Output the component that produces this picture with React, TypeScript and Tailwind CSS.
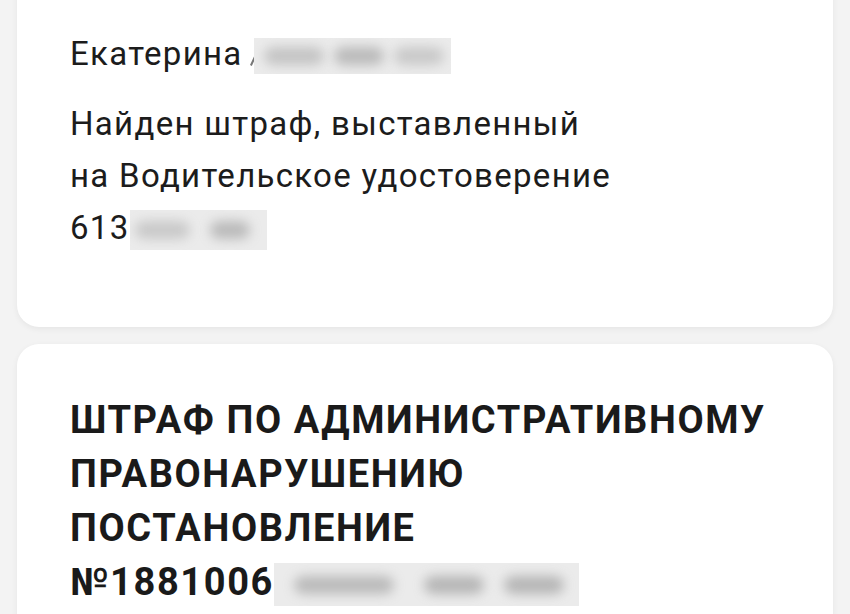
import React from 'react';

const Blur = ({ w, h, blobs }: { w: number; h: number; blobs: number[][] }) => (
  <span
    className="relative inline-block overflow-hidden bg-[#ebebeb] align-middle"
    style={{ width: w, height: h }}
  >
    {blobs.map(([l, bw, o], i) => (
      <span
        key={i}
        className="absolute top-1/2 -translate-y-1/2 h-[18px] rounded-full bg-[#8a8a8a] blur-[6px]"
        style={{ left: l, width: bw, opacity: o }}
      />
    ))}
  </span>
);

const App = () => {
  return (
    <div className="w-[850px] h-[614px] overflow-hidden bg-[#f3f3f3] px-[17px] font-['Roboto',sans-serif] text-[#1c1c1c]">
      <div className="-mt-10 rounded-[22px] bg-white pt-[68px] pb-[73px] pl-[53px] shadow-[0_2px_6px_rgba(0,0,0,0.06)]">
        <div className="text-[33px] leading-[52px] tracking-[1.3px]">
          Екатерина{' '}
          <span className="inline-block h-[10px] w-[2px] rotate-[25deg] bg-[#777] align-[-1px]" />
          <Blur w={197} h={36} blobs={[[10, 60, 0.4], [80, 50, 0.5], [140, 50, 0.35]]} />
        </div>
        <div className="mt-[18px] text-[33px] leading-[52px] tracking-[1.3px]">
          <div>Найден штраф, выставленный</div>
          <div>на Водительское удостоверение</div>
          <div>
            613
            <Blur w={137} h={40} blobs={[[5, 55, 0.35], [80, 40, 0.5]]} />
          </div>
        </div>
      </div>

      <div className="mt-[17px] rounded-[22px] bg-white pt-[49px] pb-[40px] pl-[53px] shadow-[0_2px_6px_rgba(0,0,0,0.06)]">
        <div className="text-[38px] leading-[54px] font-bold tracking-[1.6px] text-[#1a1a1a]">
          <div>ШТРАФ ПО АДМИНИСТРАТИВНОМУ</div>
          <div>ПРАВОНАРУШЕНИЮ</div>
          <div>ПОСТАНОВЛЕНИЕ</div>
          <div>
            №1881006
            <Blur w={305} h={43} blobs={[[20, 100, 0.5], [150, 60, 0.55], [230, 60, 0.55]]} />
          </div>
        </div>
      </div>
    </div>
  );
};

export default App;
